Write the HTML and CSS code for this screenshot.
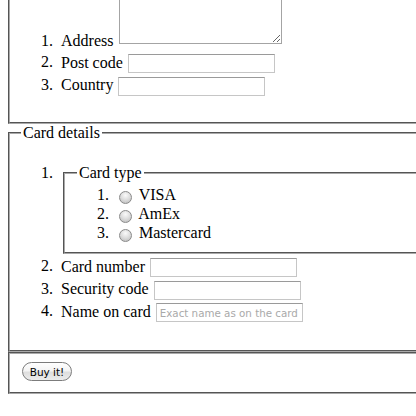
FILE: index.html
```html
<!DOCTYPE html>
<html lang="en">
<head>
<meta charset="utf-8">
<title>Order form</title>
<link rel="stylesheet" href="styles.css">
</head>
<body>
<form class="order" action="#">
  <fieldset class="group group-address">
    <ol class="fields">
      <li class="field field-address"><label for="address">Address</label> <textarea id="address" class="textarea" rows="3" cols="20"></textarea></li>
      <li class="field"><label for="postcode">Post code</label> <input id="postcode" class="text-input" type="text"></li>
      <li class="field"><label for="country">Country</label> <input id="country" class="text-input" type="text"></li>
    </ol>
  </fieldset>
  <fieldset class="group group-card">
    <legend>Card details</legend>
    <ol class="fields">
      <li class="field field-group">
        <fieldset class="subgroup">
          <legend>Card type</legend>
          <ol class="options">
            <li class="option"><input id="visa" class="radio" type="radio" name="cardtype"> <label for="visa">VISA</label></li>
            <li class="option"><input id="amex" class="radio" type="radio" name="cardtype"> <label for="amex">AmEx</label></li>
            <li class="option"><input id="mastercard" class="radio" type="radio" name="cardtype"> <label for="mastercard">Mastercard</label></li>
          </ol>
        </fieldset>
      </li>
      <li class="field"><label for="cardnumber">Card number</label> <input id="cardnumber" class="text-input" type="text"></li>
      <li class="field"><label for="secure">Security code</label> <input id="secure" class="text-input" type="text"></li>
      <li class="field"><label for="namecard">Name on card</label> <input id="namecard" class="text-input" type="text" placeholder="Exact name as on the card"></li>
    </ol>
  </fieldset>
  <fieldset class="group group-submit">
    <button type="submit" class="button">Buy it!</button>
  </fieldset>
</form>
</body>
</html>
```
FILE: styles.css
```css
html {
  overflow: hidden;
  background: #fff;
}

body {
  margin: 0 0 0 8px;
  font-family: "Liberation Serif", "Times New Roman", serif;
  font-size: 16px;
  color: #000;
}

.order {
  width: 600px;
  margin-top: -42px;
}

.group {
  margin: 0;
  padding: 6px 12px 10px 11px;
  border: 2px groove #a9a9a9;
  min-width: 0;
}

legend {
  padding: 0 2px;
}

.fields {
  margin: 16px 0 14px;
  padding-left: 40px;
}

.group-card .fields {
  margin-bottom: 15.5px;
}

.fields > li::marker,
.options > li::marker {
  content: counter(list-item) ".\00a0\00a0";
}

.fields > .field-group::marker {
  content: none;
}

.fields > .field-group::before {
  content: counter(list-item) ".\00a0\00a0";
  float: left;
  width: 20px;
  margin-left: -20px;
  text-align: right;
  white-space: nowrap;
}

.field-address {
  padding-bottom: 2.5px;
}

.textarea {
  box-sizing: border-box;
  width: 163px;
  height: 60px;
  margin: 2px 0 6px 2px;
  padding: 2px;
  border: 1px solid #a4a4a4;
  border-top-color: #8c8c8c;
  vertical-align: bottom;
  font: 11px "DejaVu Sans", sans-serif;
}

.text-input {
  box-sizing: border-box;
  width: 147px;
  height: 19px;
  margin: 1.75px 2px 1.75px 1px;
  padding: 1px 3px;
  border: 1px solid #c6c6c6;
  border-top-color: #9a9a9a;
  vertical-align: middle;
  font: 10.3px "DejaVu Sans", sans-serif;
  color: #000;
  background: #fff;
}

.text-input::placeholder {
  color: #a9a9a9;
}

.subgroup {
  margin: 0 0 3px 2px;
  padding: 3px 12px 10px 12px;
  border: 2px groove #a9a9a9;
  min-width: 0;
}

.options {
  margin: 0;
  padding-left: 40px;
  line-height: 19px;
}

.radio {
  appearance: none;
  -webkit-appearance: none;
  box-sizing: border-box;
  width: 13px;
  height: 13px;
  margin: 0 3px 0 2px;
  border: 1px solid #8a8a8a;
  border-radius: 50%;
  background: radial-gradient(circle at 50% 30%, #fafafa 0%, #dcdcdc 50%, #b8b8b8 100%);
  vertical-align: -4px;
}

.group-submit {
  padding-top: 6px;
}

.button {
  display: block;
  box-sizing: border-box;
  width: 50px;
  height: 19px;
  margin: 2.5px 0 1px 1px;
  padding: 0;
  border: 1px solid #7c7c7c;
  border-radius: 10px;
  background: linear-gradient(#ffffff 0%, #f4f4f4 45%, #dedede 55%, #ececec 100%);
  font: 10.5px "DejaVu Sans", sans-serif;
  color: #000;
  line-height: 16px;
}
```
